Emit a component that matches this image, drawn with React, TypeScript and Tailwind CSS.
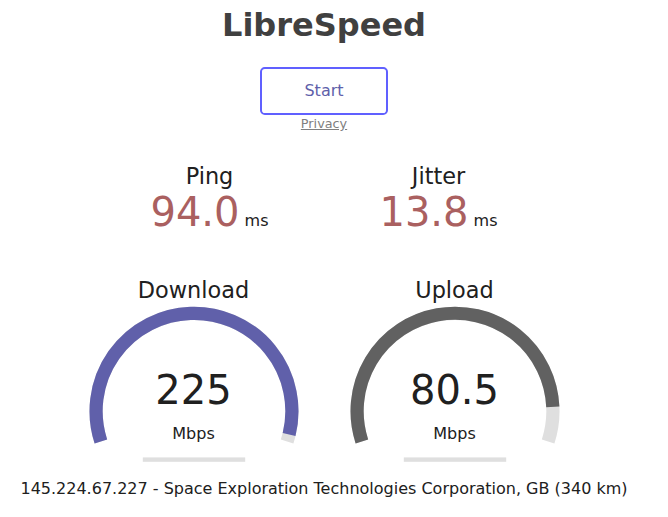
import React from "react";

const CX = 128;
const CY = 136.2;
const R = 97.91;
const LW = 13.2;
const START = -Math.PI * 1.1;
const END = Math.PI * 0.1;

function arcPath(a0: number, a1: number): string {
  const x0 = CX + R * Math.cos(a0);
  const y0 = CY + R * Math.sin(a0);
  const x1 = CX + R * Math.cos(a1);
  const y1 = CY + R * Math.sin(a1);
  const large = a1 - a0 > Math.PI ? 1 : 0;
  return `M ${x0} ${y0} A ${R} ${R} 0 ${large} 1 ${x1} ${y1}`;
}

function mbpsToAmount(s: number): number {
  return 1 - 1 / Math.pow(1.3, Math.sqrt(s));
}

function Gauge({
  name,
  value,
  mbps,
  color,
}: {
  name: string;
  value: string;
  mbps: number;
  color: string;
}) {
  const amount = mbpsToAmount(mbps);
  return (
    <div className="relative w-[256px] h-[200px]">
      <svg width={256} height={200} className="absolute inset-0">
        <path d={arcPath(START, END)} stroke="#DFDFDF" strokeWidth={LW} fill="none" />
        <path
          d={arcPath(START, START + amount * Math.PI * 1.2)}
          stroke={color}
          strokeWidth={LW}
          fill="none"
        />
        <rect x={76.8} y={182.4} width={102.4} height={4.4} fill="#DFDFDF" />
      </svg>
      <div className="absolute top-[2.24px] left-0 w-full text-[22.4px] leading-[normal]">{name}</div>
      <div className="absolute bottom-[62px] left-0 w-full text-[40px] leading-[normal]">{value}</div>
      <div className="absolute bottom-[32px] left-0 w-full text-[16px] leading-[normal]">Mbps</div>
    </div>
  );
}

function Stat({ name, value }: { name: string; value: string }) {
  return (
    <div className="w-[224px] h-[112px] text-center">
      <div className="text-[22.4px] leading-[normal]">{name}</div>
      <div>
        <span className="inline-block text-[40px] leading-[normal] text-[#AA6060]">{value}</span>{" "}
        <span className="inline-block">ms</span>
      </div>
    </div>
  );
}

export default function App() {
  return (
    <div className="w-[648px] bg-white text-center text-[#202020] text-[16px] leading-[normal] font-['DejaVu_Sans',sans-serif]">
      <h1 className="pt-[7px] text-[32px] leading-[37px] font-bold text-[#404040]">LibreSpeed</h1>
      <div className="mt-[23px] flex justify-center">
        <div className="w-[128px] h-[48px] box-border border-[2.4px] border-[#6060FF] rounded-[4.8px] text-[#6060AA] leading-[43.2px] cursor-pointer">
          Start
        </div>
      </div>
      <div className="h-[15px] leading-[15px]">
        <a className="text-[12.8px] text-[#808080] underline cursor-pointer">Privacy</a>
      </div>
      <div className="mt-[33px] flex justify-center gap-[5px]">
        <Stat name="Ping" value="94.0" />
        <Stat name="Jitter" value="13.8" />
      </div>
      <div className="flex justify-center gap-[5px] pb-[4px]">
        <Gauge name="Download" value="225" mbps={225} color="#6060AA" />
        <Gauge name="Upload" value="80.5" mbps={80.5} color="#616161" />
      </div>
      <div className="leading-[normal]">145.224.67.227 - Space Exploration Technologies Corporation, GB (340 km)</div>
    </div>
  );
}
